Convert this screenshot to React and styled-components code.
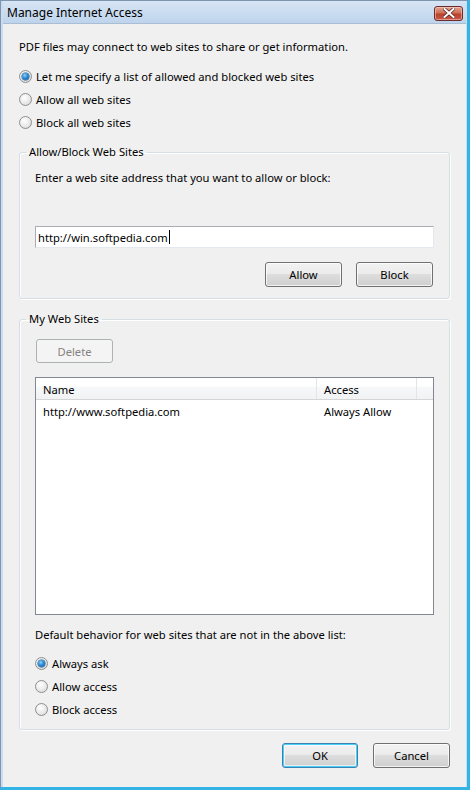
import React from "react";
import styled, { createGlobalStyle, css } from "styled-components";

const Global = createGlobalStyle`
  html, body { margin: 0; padding: 0; background: #ffffff; }
  body { font-family: "Noto Sans", "Open Sans", sans-serif; font-size: 11.2px; color: #000; }
  * { box-sizing: border-box; }
`;

const Window = styled.div`
  width: 470px;
  height: 790px;
  display: flex;
  flex-direction: column;
  background: #c9dcf0;
  border-left: 1px solid #7f95ad;
  border-top: 1px solid #7f95ad;
  border-right: 3px solid #33b4e6;
  border-bottom: 3px solid #33b4e6;
  padding: 0 1px 0 2px;
`;

const TitleBar = styled.div`
  height: 22px;
  flex: 0 0 22px;
  display: flex;
  align-items: center;
  justify-content: space-between;
  padding: 0 3px 0 4px;
  background: linear-gradient(#d7e5f4, #bed4ec);
`;

const TitleText = styled.span`
  font-size: 12px;
  color: #000;
  padding-top: 1px;
`;

const CloseButton = styled.div`
  width: 29px;
  height: 15px;
  border: 1px solid #6a2d2a;
  border-radius: 3px;
  background: linear-gradient(#e0a590 0%, #cf6f58 45%, #b8422b 55%, #c9584a 100%);
  display: flex;
  align-items: center;
  justify-content: center;
  margin-top: 2px;
  box-shadow: inset 0 0 0 1px rgba(255, 220, 210, 0.5);
`;

const Content = styled.div`
  flex: 1;
  background: #f0f0f0;
  border-top: 1px solid #a9bdd3;
  padding: 15px 16px 0 16px;
  display: flex;
  flex-direction: column;
`;

const Text = styled.div`
  line-height: 16px;
  height: 16px;
  white-space: nowrap;
  margin-top: ${(p) => p.$mt || 0}px;
`;

const RadioList = styled.div`
  display: flex;
  flex-direction: column;
  margin-top: ${(p) => p.$mt || 0}px;
`;

const RadioRow = styled.label`
  height: 23px;
  display: flex;
  align-items: center;
  gap: 4px;
  white-space: nowrap;
`;

const RadioCircle = styled.span`
  width: 13px;
  height: 13px;
  border-radius: 50%;
  border: 1px solid #8e8f8f;
  background: radial-gradient(circle at 40% 35%, #ffffff 0%, #e9e9e9 55%, #cfcfcf 100%);
  display: flex;
  align-items: center;
  justify-content: center;
  flex: 0 0 13px;
  ${(p) =>
    p.$checked &&
    css`
      &::after {
        content: "";
        width: 7px;
        height: 7px;
        border-radius: 50%;
        background: radial-gradient(circle at 40% 35%, #8ad3f7 0%, #2a8ad4 45%, #0d4f94 100%);
        box-shadow: 0 0 0 0.5px #174e86;
      }
    `}
`;

const Group = styled.fieldset`
  margin: ${(p) => p.$mt || 0}px 0 0 0;
  padding: 0;
  border: 1px solid #d5dfe5;
  border-radius: 3px;
  box-shadow: inset 1px 1px 0 #ffffff, 1px 1px 0 #ffffff;
  min-width: 0;
`;

const Legend = styled.legend`
  margin-left: 6px;
  padding: 0 3px;
  line-height: 16px;
  height: 16px;
`;

const GroupBody = styled.div`
  padding: 0 15px ${(p) => p.$pb || 8}px 15px;
  display: flex;
  flex-direction: column;
`;

const Input = styled.div`
  margin-top: 40px;
  height: 22px;
  border: 1px solid;
  border-color: #abadb3 #e3e9ef #e3e9ef #abadb3;
  background: #fff;
  display: flex;
  align-items: center;
  padding-left: 2px;
`;

const Caret = styled.span`
  display: inline-block;
  width: 1px;
  height: 14px;
  background: #000;
  margin-left: 1px;
`;

const ButtonRow = styled.div`
  display: flex;
  justify-content: ${(p) => p.$justify || "flex-end"};
  gap: ${(p) => p.$gap || 14}px;
  margin-top: ${(p) => p.$mt || 0}px;
  padding-right: ${(p) => p.$pr || 0}px;
  padding-left: ${(p) => p.$pl || 0}px;
`;

const Button = styled.div`
  width: ${(p) => p.$w || 77}px;
  height: 25px;
  border: 1px solid #707070;
  border-radius: 3px;
  background: linear-gradient(#f2f2f2 0%, #ebebeb 49%, #dddddd 50%, #cfcfcf 100%);
  box-shadow: inset 0 0 0 1px rgba(255, 255, 255, 0.75);
  display: flex;
  align-items: center;
  justify-content: center;
  ${(p) =>
    p.$default &&
    css`
      border-color: #3c7fb1;
      box-shadow: inset 0 0 0 1px #48d0f8, inset 0 0 0 2px rgba(255, 255, 255, 0.6);
    `}
  ${(p) =>
    p.$disabled &&
    css`
      border-color: #adb2b5;
      background: #f4f4f4;
      color: #838383;
      box-shadow: none;
      height: 24px;
    `}
`;

const List = styled.div`
  margin-top: 14px;
  height: 238px;
  border: 1px solid #828790;
  background: #fff;
  display: flex;
  flex-direction: column;
`;

const Header = styled.div`
  height: 22px;
  display: grid;
  grid-template-columns: 281px 100px 1fr;
  background: linear-gradient(#ffffff 0%, #ffffff 40%, #f7f8fa 41%, #f1f2f4 100%);
  border-bottom: 1px solid #d5d5d5;
`;

const HeaderCell = styled.div`
  display: flex;
  align-items: center;
  padding-left: 7px;
  padding-top: 1px;
  border-right: 1px solid #e4e5e7;
  white-space: nowrap;
`;

const Row = styled.div`
  height: 22px;
  display: grid;
  grid-template-columns: 281px 1fr;
  align-items: center;
`;

const Cell = styled.div`
  padding-left: 7px;
  white-space: nowrap;
`;

const Footer = styled.div`
  margin-top: 13px;
`;

function Radio({ checked, children }) {
  return (
    <RadioRow>
      <RadioCircle $checked={checked} />
      <span>{children}</span>
    </RadioRow>
  );
}

export default function App() {
  return (
    <>
      <Global />
      <Window>
        <TitleBar>
          <TitleText>Manage Internet Access</TitleText>
          <CloseButton>
            <svg width="12" height="10" viewBox="0 0 12 10">
              <path
                d="M1.5 1 L10.5 9 M10.5 1 L1.5 9"
                stroke="#5a2320"
                strokeWidth="3.4"
                strokeLinecap="square"
              />
              <path
                d="M1.5 1 L10.5 9 M10.5 1 L1.5 9"
                stroke="#ffffff"
                strokeWidth="2"
                strokeLinecap="square"
              />
            </svg>
          </CloseButton>
        </TitleBar>
        <Content>
          <Text>PDF files may connect to web sites to share or get information.</Text>
          <RadioList $mt={10}>
            <Radio checked>Let me specify a list of allowed and blocked web sites</Radio>
            <Radio>Allow all web sites</Radio>
            <Radio>Block all web sites</Radio>
          </RadioList>
          <Group $mt={10}>
            <Legend>Allow/Block Web Sites</Legend>
            <GroupBody $pb={11}>
              <Text $mt={10}>Enter a web site address that you want to allow or block:</Text>
              <Input>
                http://win.softpedia.com
                <Caret />
              </Input>
              <ButtonRow $mt={14} $pr={1}>
                <Button>Allow</Button>
                <Button>Block</Button>
              </ButtonRow>
            </GroupBody>
          </Group>
          <Group $mt={12}>
            <Legend>My Web Sites</Legend>
            <GroupBody>
              <ButtonRow $justify="flex-start" $mt={12} $pl={1}>
                <Button $disabled>Delete</Button>
              </ButtonRow>
              <List>
                <Header>
                  <HeaderCell>Name</HeaderCell>
                  <HeaderCell>Access</HeaderCell>
                  <div />
                </Header>
                <Row>
                  <Cell>http://www.softpedia.com</Cell>
                  <Cell>Always Allow</Cell>
                </Row>
              </List>
              <Text $mt={12}>Default behavior for web sites that are not in the above list:</Text>
              <RadioList $mt={9}>
                <Radio checked>Always ask</Radio>
                <Radio>Allow access</Radio>
                <Radio>Block access</Radio>
              </RadioList>
            </GroupBody>
          </Group>
          <Footer>
            <ButtonRow $gap={15}>
              <Button $default $w={76}>OK</Button>
              <Button $w={77}>Cancel</Button>
            </ButtonRow>
          </Footer>
        </Content>
      </Window>
    </>
  );
}
